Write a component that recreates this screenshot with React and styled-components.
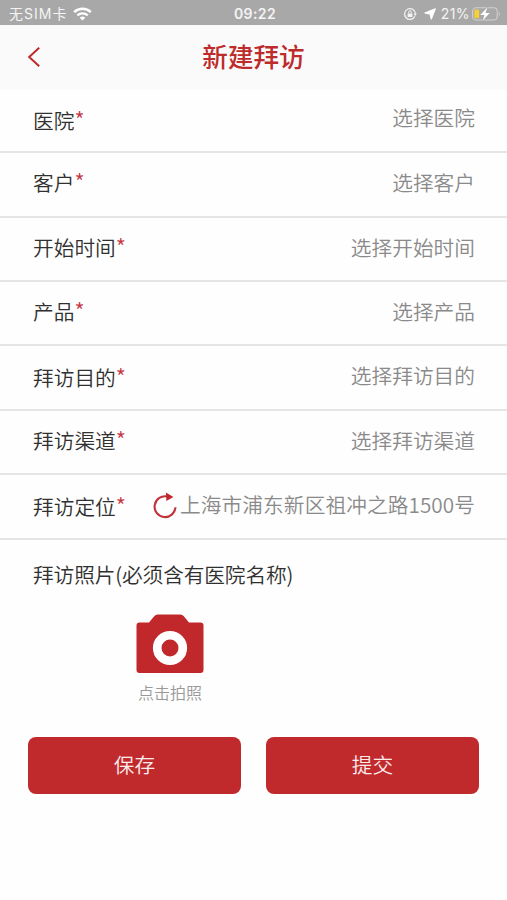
import React from "react";
import styled, { createGlobalStyle } from "styled-components";

const fields = [
  { label: "医院", value: "选择医院", height: 63, labelShift: 2, lift: 3 },
  { label: "客户", value: "选择客户", height: 65, bottom: 6 },
  { label: "开始时间", value: "选择开始时间", height: 64, bottom: 5 },
  { label: "产品", value: "选择产品", height: 64 },
  { label: "拜访目的", value: "选择拜访目的", height: 65, labelShift: 3, lift: 1 },
  { label: "拜访渠道", value: "选择拜访渠道", height: 64, bottom: 5 },
  {
    label: "拜访定位",
    value: "上海市浦东新区祖冲之路1500号",
    height: 65,
    labelShift: 3,
    lift: 1,
    refresh: true,
  },
];

function StatusBar() {
  return (
    <StatusBox>
      <StatusLeft>
        <Carrier>无SIM卡</Carrier>
        <svg width="19" height="14" viewBox="0 0 19 14" fill="none" stroke="#fff">
          <path d="M1.2 5.1a12 12 0 0 1 16.6 0" strokeWidth="2.5" />
          <path d="M4.3 8.4a7.6 7.6 0 0 1 10.4 0" strokeWidth="2.3" />
          <path d="M9.5 13.6 6.7 10.7a4.2 4.2 0 0 1 5.6 0z" fill="#fff" stroke="none" />
        </svg>
      </StatusLeft>
      <Clock>09:22</Clock>
      <StatusRight>
        <svg width="14" height="14" viewBox="0 0 14 14" fill="none" stroke="#f4f4f4">
          <path d="M11.9 9.3a5.4 5.4 0 1 1 .5-2.3" strokeWidth="1.2" />
          <path d="M10.5 6.8h3.4l-1.7 2.3z" fill="#f4f4f4" stroke="none" />
          <rect x="4.6" y="6.4" width="4.8" height="3.6" rx=".5" fill="#f4f4f4" stroke="none" />
          <path d="M5.6 6.5V5.3a1.4 1.4 0 0 1 2.8 0v1.2" strokeWidth="1" />
        </svg>
        <Arrow width="12" height="12" viewBox="0 0 12 12" fill="#fff">
          <path
            d="M11.3.9 7.3 11 6.2 6.1.9 5z"
            stroke="#fff"
            strokeWidth="1.2"
            strokeLinejoin="round"
          />
        </Arrow>
        <Percent>21%</Percent>
        <Battery width="29" height="14" viewBox="0 0 29 14">
          <rect x=".6" y=".8" width="24.6" height="12.2" rx="3.4" fill="none" stroke="#cfcfcf" strokeWidth="1.1" />
          <path d="M26.8 4.6q2 2.3 0 4.6z" fill="#cfcfcf" />
          <rect x="2.3" y="2.5" width="4.8" height="8.8" rx="1.3" fill="#f6cf35" />
          <path
            d="M15.4.4 8.2 7.9h4.3l-1.8 5.7 7.1-7.6h-4.3z"
            fill="#fff"
            stroke="#a8a8a8"
            strokeWidth=".8"
            paintOrder="stroke"
          />
        </Battery>
      </StatusRight>
    </StatusBox>
  );
}

function RefreshIcon() {
  return (
    <RefreshSvg width="25" height="27" viewBox="0 0 25 27">
      <path d="M14.5 4.6A10.4 10.4 0 1 0 22.4 15.2" fill="none" stroke="#c1333a" strokeWidth="2.1" />
      <path d="M12.9.6 20.4 5 13.4 9z" fill="#c1282d" />
    </RefreshSvg>
  );
}

function App() {
  return (
    <Page>
      <GlobalStyle />
      <StatusBar />
      <Header>
        <Back width="14" height="22" viewBox="0 0 14 22">
          <path d="M12.2 1.7 2.2 11l10 9.3" fill="none" stroke="#bd2b2b" strokeWidth="2" />
        </Back>
        <Title>新建拜访</Title>
      </Header>
      {fields.map((field) => (
        <Row key={field.label} $height={field.height} $bottom={field.bottom}>
          <Label $shift={field.labelShift}>
            {field.label}
            <Required>*</Required>
          </Label>
          <Value $lift={field.lift}>
            {field.refresh && <RefreshIcon />}
            <ValueText $wide={field.refresh}>{field.value}</ValueText>
          </Value>
        </Row>
      ))}
      <PhotoTitle>拜访照片(必须含有医院名称)</PhotoTitle>
      <PhotoButton>
        <svg width="68" height="60" viewBox="0 0 68 60">
          <path
            d="M3.5 8.5H13L18.4 2Q19.7.5 21.6.5H44.4Q46.3.5 47.6 2L53 8.5H64.5Q67.5 8.5 67.5 11.5V56Q67.5 59 64.5 59H3.5Q.5 59 .5 56V11.5Q.5 8.5 3.5 8.5z"
            fill="#c1282c"
          />
          <circle cx="34" cy="34" r="12.8" fill="none" stroke="#fff" strokeWidth="8.6" />
        </svg>
        <PhotoText>点击拍照</PhotoText>
      </PhotoButton>
      <Actions>
        <Button>保存</Button>
        <Button>提交</Button>
      </Actions>
    </Page>
  );
}

export default App;

const GlobalStyle = createGlobalStyle`
  body {
    margin: 0;
    background: #fff;
  }

  * {
    box-sizing: border-box;
  }
`;

const Page = styled.div`
  width: 507px;
  height: 900px;
  overflow: hidden;
  background: #fefefe;
  font-family: "Noto Sans CJK SC", sans-serif;
`;

const StatusBox = styled.div`
  height: 25px;
  padding: 2px 6px 0 9px;
  display: grid;
  grid-template-columns: 1fr auto 1fr;
  align-items: center;
  background: #a8a8a8;
  color: #f4f4f4;
  line-height: 22px;
`;

const StatusLeft = styled.div`
  display: flex;
  align-items: center;
  gap: 6px;
`;

const Carrier = styled.span`
  font-family: Inter, "Noto Sans CJK SC", sans-serif;
  font-size: 14px;
  letter-spacing: 1px;
`;

const Clock = styled.span`
  font-family: Inter, sans-serif;
  font-size: 14px;
  font-weight: 600;
  letter-spacing: 0.4px;
`;

const StatusRight = styled.div`
  display: flex;
  align-items: center;
  justify-content: flex-end;
`;

const Arrow = styled.svg`
  margin-left: 7px;
`;

const Percent = styled.span`
  margin-left: 5px;
  font-family: Inter, sans-serif;
  font-size: 14px;
  letter-spacing: 0.4px;
`;

const Battery = styled.svg`
  margin-left: 2px;
`;

const Header = styled.div`
  height: 65px;
  padding: 0 27px;
  display: grid;
  grid-template-columns: 1fr auto 1fr;
  align-items: center;
  background: #fafafa;
`;

const Back = styled.svg`
  margin-top: -1px;
`;

const Title = styled.h1`
  margin: 0;
  padding-bottom: 3px;
  font-size: 25.6px;
  font-weight: 500;
  line-height: 36px;
  color: #bd2b2b;
`;

const Row = styled.div`
  height: ${(props) => props.$height}px;
  padding: 0 32px ${(props) => props.$bottom || 4}px 33px;
  display: flex;
  align-items: center;
  justify-content: space-between;
  border-bottom: 2px solid #e5e5e5;
  font-size: 20.7px;
  line-height: 30px;
  white-space: nowrap;
`;

const Label = styled.div`
  padding-top: ${(props) => props.$shift || 0}px;
  color: #303030;
  font-weight: 350;
`;

const Required = styled.span`
  color: #c63a45;
  font-size: 22px;
  font-weight: 350;
  line-height: 1;
`;

const Value = styled.div`
  padding-bottom: ${(props) => props.$lift || 0}px;
  display: flex;
  align-items: center;
  color: #8a8a8a;
  font-weight: 350;
`;

const ValueText = styled.span`
  letter-spacing: ${(props) => (props.$wide ? "0.08px" : "normal")};
`;

const RefreshSvg = styled.svg`
  margin: 3px 2px 0 0;
`;

const PhotoTitle = styled.div`
  padding: 19px 33px 0;
  font-size: 20.7px;
  font-weight: 350;
  line-height: 30px;
  letter-spacing: -0.12px;
  color: #303030;
`;

const PhotoButton = styled.div`
  width: 68px;
  margin: 25px 0 0 136px;
  display: flex;
  flex-direction: column;
  align-items: center;
`;

const PhotoText = styled.span`
  margin-top: 7px;
  font-size: 16px;
  font-weight: 350;
  line-height: 22px;
  color: #999;
`;

const Actions = styled.div`
  margin-top: 34px;
  padding: 0 28px;
  display: grid;
  grid-template-columns: 1fr 1fr;
  gap: 25px;
`;

const Button = styled.button`
  height: 57px;
  padding: 0 0 3px;
  border: 0;
  border-radius: 8px;
  background: #c02a2d;
  color: #fbecec;
  font-family: inherit;
  font-size: 20.7px;
  font-weight: 350;
`;
